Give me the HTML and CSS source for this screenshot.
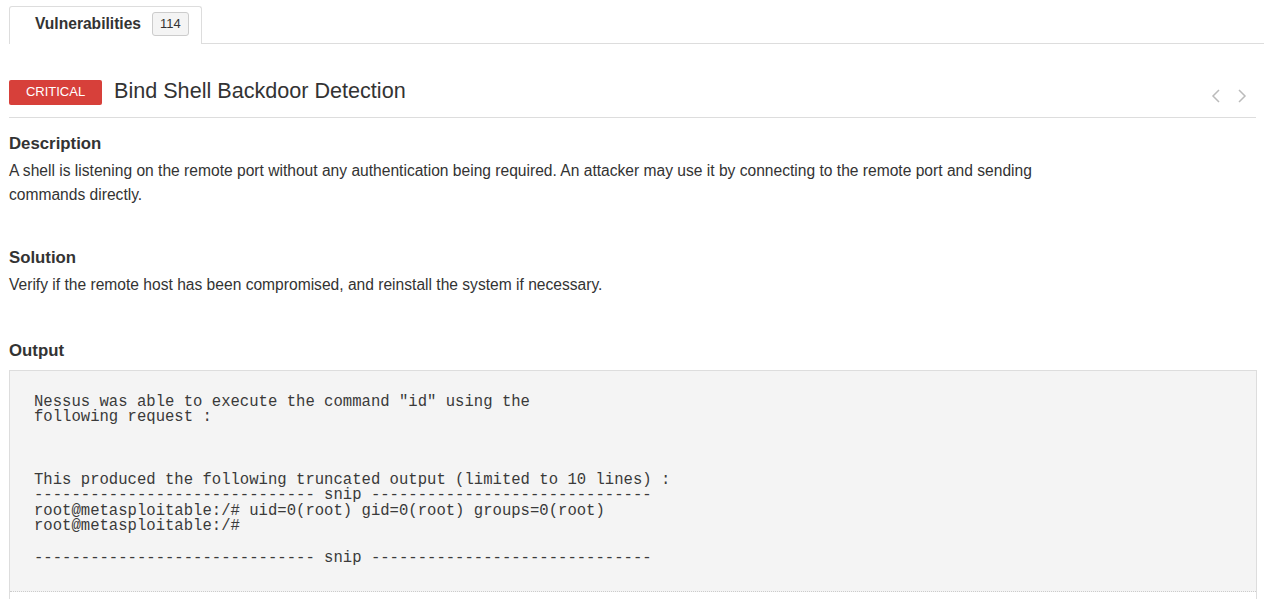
FILE: index.html
```html
<!DOCTYPE html>
<html>
<head>
<meta charset="utf-8">
<link rel="stylesheet" href="styles.css">
</head>
<body>
<div class="tabs">
  <div class="tab active">
    <span class="tab-label">Vulnerabilities</span>
    <span class="count">114</span>
  </div>
  <div class="tab-rest"></div>
</div>

<div class="vuln-head">
  <span class="sev">CRITICAL</span>
  <h1 class="title">Bind Shell Backdoor Detection</h1>
  <div class="nav">
    <svg width="12" height="16" viewBox="0 0 12 16"><path d="M9 2 L3 8 L9 14" fill="none" stroke="#bbb" stroke-width="1.5"/></svg>
    <svg width="12" height="16" viewBox="0 0 12 16"><path d="M3 2 L9 8 L3 14" fill="none" stroke="#bbb" stroke-width="1.5"/></svg>
  </div>
</div>

<section class="block">
  <h2 class="block-title">Description</h2>
  <p class="block-text">A shell is listening on the remote port without any authentication being required. An attacker may use it by connecting to the remote port and sending commands directly.</p>
</section>

<section class="block">
  <h2 class="block-title">Solution</h2>
  <p class="block-text">Verify if the remote host has been compromised, and reinstall the system if necessary.</p>
</section>

<section class="block output">
  <h2 class="block-title">Output</h2>
  <div class="output-box">
<pre class="output-pre">

Nessus was able to execute the command "id" using the
following request :



This produced the following truncated output (limited to 10 lines) :
------------------------------ snip ------------------------------
root@metasploitable:/# uid=0(root) gid=0(root) groups=0(root)
root@metasploitable:/#

------------------------------ snip ------------------------------

</pre>
  </div>
</section>
</body>
</html>
```

FILE: styles.css
```css
html, body {
  margin: 0;
  padding: 0;
  background: #fff;
}
body {
  font-family: "Liberation Sans", Arial, sans-serif;
  color: #333;
  padding: 6px 0 0 9px;
  overflow: hidden;
}
.tabs {
  display: flex;
  align-items: flex-end;
  height: 38px;
}
.tab {
  box-sizing: border-box;
  width: 193px;
  height: 38px;
  border: 1px solid #ddd;
  border-bottom: none;
  border-radius: 3px 3px 0 0;
  display: flex;
  align-items: center;
  padding: 0 0 3px 25px;
  background: #fff;
}
.tab-label {
  font-weight: bold;
  font-size: 15.6px;
  color: #333;
}
.count {
  margin-left: 11px;
  box-sizing: border-box;
  height: 24px;
  padding: 0 7px;
  border: 1px solid #ccc;
  border-radius: 3px;
  background: #f4f4f4;
  font-size: 13px;
  line-height: 22px;
  color: #333;
}
.tab-rest {
  flex: 1;
  border-bottom: 1px solid #ddd;
}
.vuln-head {
  display: flex;
  align-items: flex-start;
  margin: 36px 8px 0 0;
  padding-bottom: 12px;
  border-bottom: 1px solid #ddd;
}
.sev {
  box-sizing: border-box;
  width: 93px;
  height: 25px;
  background: #d7403a;
  border-radius: 2px;
  color: #fff;
  font-size: 13px;
  text-align: center;
  line-height: 23px;
}
.title {
  margin: 0 0 0 12px;
  font-size: 21.6px;
  font-weight: normal;
  color: #333;
  line-height: 21px;
}
.nav {
  margin-left: auto;
  display: flex;
  gap: 14px;
  padding: 8px 8px 0 0;
}
.block {
  margin-top: 15px;
}
.block + .block {
  margin-top: 40px;
}
.block.output {
  margin-top: 43px;
}
.block-title {
  margin: 0;
  font-size: 16.8px;
  font-weight: bold;
  line-height: 22px;
}
.block-text {
  margin: 4px 0 0;
  font-size: 15.6px;
  line-height: 24px;
  max-width: 1060px;
}
.output-box {
  margin: 8px 7px 0 0;
  border: 1px solid #ddd;
  border-bottom: none;
  height: 228px;
}
.output-pre {
  margin: 0;
  background: #f4f4f4;
  border-bottom: 1px dotted #ccc;
  padding: 8px 24px 9px;
  font-family: "Liberation Mono", "Courier New", monospace;
  font-size: 15.6px;
  line-height: 15.6px;
  color: #3a3a3a;
}
```
